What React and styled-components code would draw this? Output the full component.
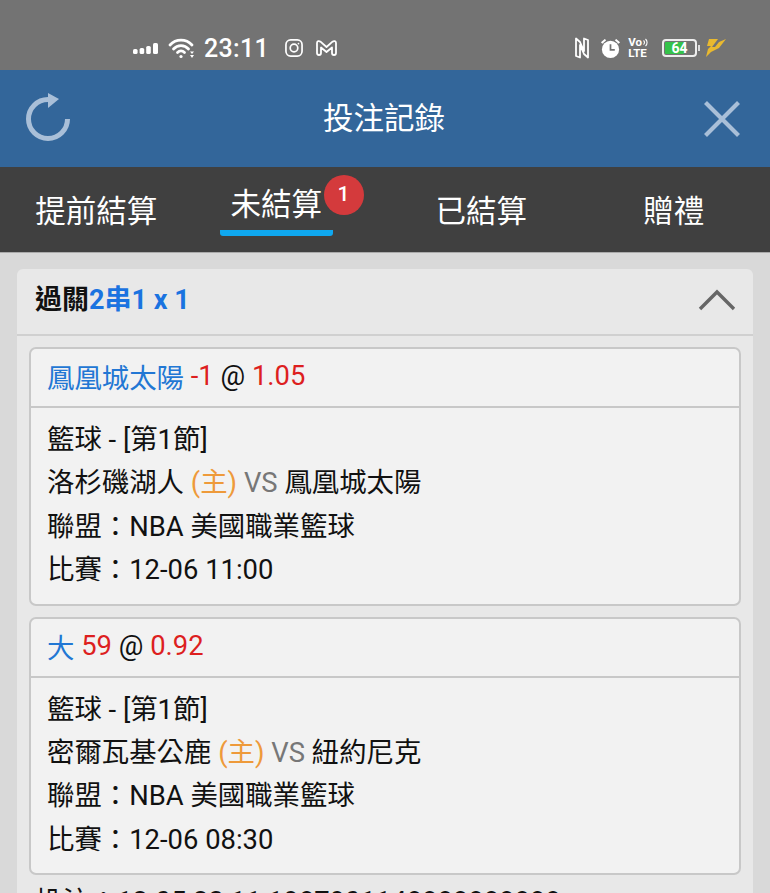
import styled, { createGlobalStyle } from 'styled-components';

const GlobalStyle = createGlobalStyle`
	html, body {
		margin: 0;
		padding: 0;
		height: 100%;
		overflow: hidden;
		background: #d9d9d9;
	}
	body {
		font-family: Roboto, 'Noto Sans CJK TC', sans-serif;
	}
`;

const Page = styled.div`
	width: 770px;
	height: 893px;
	overflow: hidden;
	background: #d9d9d9;
`;

const StatusBar = styled.div`
	height: 70px;
	box-sizing: border-box;
	padding: 26px 43px 0 133px;
	background: #737373;
	display: flex;
	align-items: center;
	justify-content: space-between;
	color: #fff;
`;

const StatusGroup = styled.div`
	display: flex;
	align-items: center;
`;

/* spacing between status icons differs from one icon to the next */
const StatusSlot = styled.span`
	display: flex;
	align-items: center;
	margin-left: ${(p) => p.$left || 0}px;
`;

const Clock = styled.span`
	font-size: 25px;
	font-weight: 500;
	line-height: 1;
	letter-spacing: 0.3px;
`;

const VoLte = styled.span`
	display: flex;
	flex-direction: column;
	align-items: flex-start;
	font-size: 11.5px;
	font-weight: 700;
	line-height: 11px;
`;

const VoRow = styled.span`
	display: flex;
	align-items: center;
	gap: 1px;
`;

const Battery = styled.div`
	position: relative;
	width: 35px;
	height: 18px;
	box-sizing: border-box;
	border: 2px solid #eee;
	border-radius: 4px;
	padding: 1px;
	display: flex;
	&::after {
		content: '';
		position: absolute;
		right: -5px;
		top: 4px;
		width: 2px;
		height: 6px;
		background: #ddd;
	}
`;

const BatteryFill = styled.div`
	height: 100%;
	background: #35c24a;
	border-radius: 1px;
`;

const BatteryText = styled.span`
	position: absolute;
	left: 0;
	right: 0;
	top: -1px;
	text-align: center;
	font-size: 14px;
	font-weight: 700;
	line-height: 16px;
	color: #fff;
`;

const Header = styled.header`
	height: 97px;
	box-sizing: border-box;
	padding: 0 30px 0 26px;
	background: #33669a;
	display: flex;
	align-items: center;
	justify-content: space-between;
`;

const HeaderTitle = styled.div`
	color: #fff;
	font-size: 30.5px;
	line-height: 1;
	margin-right: 8px;
	padding-top: 2px;
`;

const Tabs = styled.nav`
	height: 86px;
	background: #404040;
	display: grid;
	grid-template-columns: repeat(4, 1fr);
	border-bottom: 1px solid #aaa;
	box-sizing: border-box;
`;

const TabSlot = styled.div`
	display: flex;
	align-items: center;
	justify-content: center;
	padding-right: ${(p) => (p.$active ? 25 : 0)}px;
	padding-top: 5px;
`;

const Tab = styled.div`
	position: relative;
	color: #fff;
	font-size: 30.5px;
	line-height: 44px;
	padding: ${(p) => (p.$active ? '0 11px 3px' : '0')};
	margin-top: ${(p) => (p.$active ? -5 : 0)}px;
	border-bottom: ${(p) => (p.$active ? '6px solid #0fa8f0' : '0')};
	border-radius: 3px;
`;

const Badge = styled.span`
	position: absolute;
	left: 104px;
	top: -8px;
	width: 40px;
	height: 40px;
	border-radius: 50%;
	background: #d43a3c;
	color: #fff;
	font-family: Roboto, sans-serif;
	font-size: 21px;
	font-weight: 500;
	line-height: 38px;
	text-align: center;
`;

const Content = styled.main`
	padding: 16px 17px 0;
`;

const Panel = styled.section`
	background: #e8e8e8;
	border-radius: 6px 6px 0 0;
`;

const PanelHead = styled.div`
	height: 67px;
	box-sizing: border-box;
	padding: 0 17px 4px 18px;
	border-bottom: 2px solid #d0d0d0;
	display: flex;
	align-items: center;
	justify-content: space-between;
`;

const PanelTitle = styled.span`
	font-size: 27px;
	font-weight: 700;
	color: #111;
	padding-bottom: 4px;
`;

const Accent = styled.span`
	color: ${(p) => p.$color};
`;

const PanelBody = styled.div`
	padding: 11px 12px 0;
	display: flex;
	flex-direction: column;
	gap: 11px;
`;

const BetCard = styled.article`
	background: #f2f2f2;
	border: 2px solid #c8c8c8;
	border-radius: 7px;
`;

const BetTitle = styled.div`
	height: 59px;
	box-sizing: border-box;
	padding: 0 16px 3px;
	border-bottom: 2px solid #c8c8c8;
	display: flex;
	align-items: center;
	white-space: pre;
	font-size: 27.4px;
	color: #111;
`;

const BetInfo = styled.div`
	padding: 11px 16px 11px;
	font-size: 27.4px;
	line-height: 43.4px;
	color: #111;
`;

const InfoLine = styled.div`
	white-space: pre;
`;

const Footnote = styled.div`
	padding: 0 18px;
	margin-top: 7px;
	font-size: 27.4px;
	line-height: 40px;
	color: #111;
	white-space: pre;
`;

const SignalIcon = () => (
	<svg width="26" height="12" viewBox="0 0 26 12" fill="#fff">
		<rect x="0" y="7" width="4.6" height="5" rx="1.6" />
		<rect x="6.6" y="6" width="4.6" height="6" rx="1.6" />
		<rect x="13.2" y="4" width="4.6" height="8" rx="1.6" />
		<rect x="20" y="1" width="5" height="11" rx="1.6" />
	</svg>
);

const WifiIcon = () => (
	<svg width="27" height="22" viewBox="0 0 27 22" fill="none" stroke="#fff" strokeWidth="2.8" strokeLinecap="round">
		<path d="M2 8 C8 1.5 18 1.5 24 8" />
		<path d="M5.5 12 C9.5 7.5 16.5 7.5 20.5 12" />
		<path d="M9.5 15.5 C11.5 13.5 14.5 13.5 16.5 15.5" />
		<circle cx="13" cy="19.5" r="1.6" fill="#fff" stroke="none" />
		<path d="M22 14.5 L26 14.5 L24 17 Z M22 18 L26 18 L24 21 Z" fill="#fff" stroke="none" />
	</svg>
);

const InstagramIcon = () => (
	<svg width="18" height="18" viewBox="0 0 19 19" fill="none" stroke="#fff" strokeWidth="1.8">
		<rect x="1" y="1" width="17" height="17" rx="5" />
		<circle cx="9.5" cy="9.5" r="4" />
		<circle cx="14.2" cy="4.8" r="0.9" fill="#fff" stroke="none" />
	</svg>
);

const GmailIcon = () => (
	<svg width="21" height="16" viewBox="0 0 21 16" fill="none" stroke="#fff" strokeWidth="1.8" strokeLinejoin="round">
		<path d="M1 3 C1 1 3 0.5 4.5 1.7 L10.5 7 L16.5 1.7 C18 0.5 20 1 20 3 V13 C20 14.4 19.2 15 18 15 C16.8 15 16 14.4 16 13 V7.5 L10.5 12 L5 7.5 V13 C5 14.4 4.2 15 3 15 C1.8 15 1 14.4 1 13 Z" />
	</svg>
);

const NfcIcon = () => (
	<svg width="14" height="22" viewBox="0 0 14 22" fill="none" stroke="#fff" strokeWidth="1.8" strokeLinejoin="round">
		<path d="M5 5 L1 1.5 V19 L5 20.5 V8 L9 17 L13 20.5 V3 L9 1.5 V14 Z" />
	</svg>
);

const AlarmIcon = () => (
	<svg width="21" height="22" viewBox="0 0 22 22">
		<circle cx="11" cy="12.5" r="9" fill="#fff" />
		<path d="M1 5 L5 1.5 L6.5 3 L2.5 6.5 Z M21 5 L17 1.5 L15.5 3 L19.5 6.5 Z" fill="#fff" />
		<path d="M11 7 V13 H15.5" fill="none" stroke="#737373" strokeWidth="1.8" />
	</svg>
);

const VoWaves = () => (
	<svg width="5" height="9" viewBox="0 0 5 9" fill="none" stroke="#fff" strokeWidth="1.1">
		<path d="M0.5 2.5 C1.8 3.5 1.8 5.5 0.5 6.5" />
		<path d="M2.5 1 C4.6 3 4.6 6 2.5 8" />
	</svg>
);

const BoltIcon = () => (
	<svg width="22" height="20" viewBox="0 0 22 20" fill="#e9b92f">
		<path d="M4 1 H13 L7 9 L10 9 L14 4 L21 1 L14 10 L6 14 L1 19 L3 11 L6 8 L2 8 Z" />
	</svg>
);

const RefreshIcon = () => (
	<svg width="46" height="52" viewBox="0 0 46 52" fill="none">
		<path d="M41.5 26 A19.5 19.5 0 1 1 22 6.5" stroke="#a9bfd8" strokeWidth="5" />
		<path d="M22 0 L33 6 L22 15 Z" fill="#a9bfd8" />
	</svg>
);

const CloseIcon = () => (
	<svg width="36" height="36" viewBox="0 0 36 36" stroke="#a9bfd8" strokeWidth="4.2">
		<path d="M1.5 1.5 L34.5 34.5 M34.5 1.5 L1.5 34.5" />
	</svg>
);

const ChevronUp = () => (
	<svg width="38" height="22" viewBox="0 0 38 22" fill="none" stroke="#666" strokeWidth="3.4">
		<path d="M2 20 L19 3 L36 20" />
	</svg>
);

const bets = [
	{
		pick: '鳳凰城太陽',
		line: ' -1',
		odds: '1.05',
		home: '洛杉磯湖人',
		away: '鳳凰城太陽',
		time: '12-06 11:00',
	},
	{
		pick: '大',
		line: ' 59',
		odds: '0.92',
		home: '密爾瓦基公鹿',
		away: '紐約尼克',
		time: '12-06 08:30',
	},
];

const App = () => {
	return (
		<Page>
			<GlobalStyle />
			<StatusBar>
				<StatusGroup>
					<SignalIcon />
					<StatusSlot $left={9}>
						<WifiIcon />
					</StatusSlot>
					<StatusSlot $left={9}>
						<Clock>23:11</Clock>
					</StatusSlot>
					<StatusSlot $left={16}>
						<InstagramIcon />
					</StatusSlot>
					<StatusSlot $left={13}>
						<GmailIcon />
					</StatusSlot>
				</StatusGroup>
				<StatusGroup>
					<NfcIcon />
					<StatusSlot $left={11}>
						<AlarmIcon />
					</StatusSlot>
					<StatusSlot $left={7}>
						<VoLte>
							<VoRow>
								Vo
								<VoWaves />
							</VoRow>
							<span>LTE</span>
						</VoLte>
					</StatusSlot>
					<StatusSlot $left={14}>
						<Battery>
							<BatteryFill style={{ width: '64%' }} />
							<BatteryText>64</BatteryText>
						</Battery>
					</StatusSlot>
					<StatusSlot $left={8}>
						<BoltIcon />
					</StatusSlot>
				</StatusGroup>
			</StatusBar>
			<Header>
				<RefreshIcon />
				<HeaderTitle>投注記錄</HeaderTitle>
				<CloseIcon />
			</Header>
			<Tabs>
				<TabSlot>
					<Tab>提前結算</Tab>
				</TabSlot>
				<TabSlot $active>
					<Tab $active>
						未結算
						<Badge>1</Badge>
					</Tab>
				</TabSlot>
				<TabSlot>
					<Tab>已結算</Tab>
				</TabSlot>
				<TabSlot>
					<Tab>贈禮</Tab>
				</TabSlot>
			</Tabs>
			<Content>
				<Panel>
					<PanelHead>
						<PanelTitle>
							過關<Accent $color="#1a73e0">2串1 x 1</Accent>
						</PanelTitle>
						<ChevronUp />
					</PanelHead>
					<PanelBody>
						{bets.map((bet) => (
							<BetCard key={bet.time}>
								<BetTitle>
									<Accent $color="#2277d4">{bet.pick}</Accent>
									<Accent $color="#dd1f1f">{bet.line}</Accent>
									{' @ '}
									<Accent $color="#dd1f1f">{bet.odds}</Accent>
								</BetTitle>
								<BetInfo>
									<InfoLine>籃球 - [第1節]</InfoLine>
									<InfoLine>
										{bet.home} <Accent $color="#ee9a3a">(主)</Accent> <Accent $color="#777">VS</Accent> {bet.away}
									</InfoLine>
									<InfoLine>聯盟：NBA 美國職業籃球</InfoLine>
									<InfoLine>比賽：{bet.time}</InfoLine>
								</BetInfo>
							</BetCard>
						))}
					</PanelBody>
					<Footnote>投注：12-05 23:11 1987901148888888888</Footnote>
				</Panel>
			</Content>
		</Page>
	);
};

export default App;
